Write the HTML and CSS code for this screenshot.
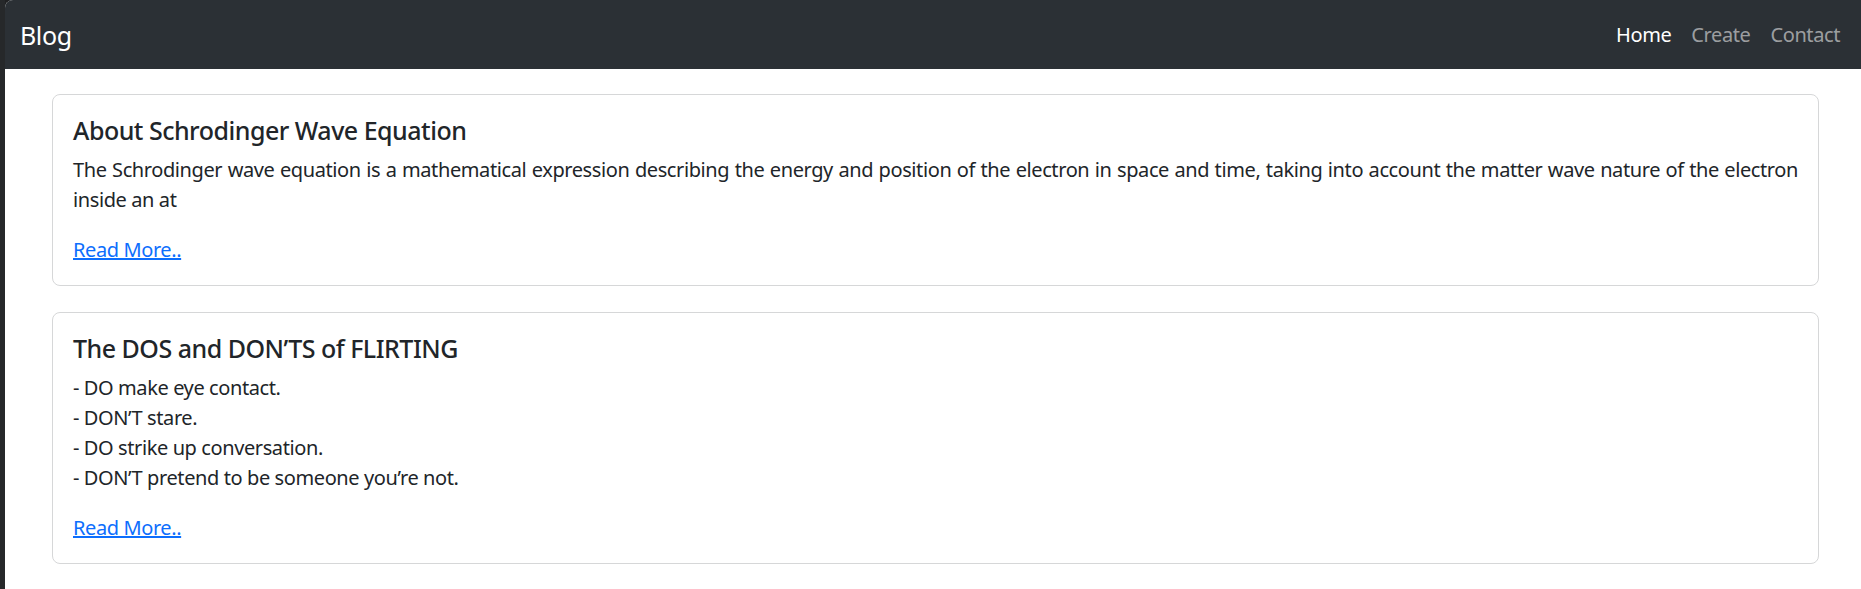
FILE: index.html
```html
<!DOCTYPE html>
<html lang="en">
<head>
<meta charset="utf-8">
<title>Blog</title>
<link rel="stylesheet" href="styles.css">
</head>
<body>
<div class="frame"></div>
<div class="app">
  <nav class="navbar">
    <a class="brand" href="#">Blog</a>
    <ul class="nav">
      <li><a class="nav-link active" href="#">Home</a></li>
      <li><a class="nav-link" href="#">Create</a></li>
      <li><a class="nav-link" href="#">Contact</a></li>
    </ul>
  </nav>
  <main class="content">
    <article class="card">
      <h5 class="card-title">About Schrodinger Wave Equation</h5>
      <p class="card-text">The Schrodinger wave equation is a mathematical expression describing the energy and position of the electron in space and time, taking into account the matter wave nature of the electron inside an at</p>
      <a class="read-more" href="#">Read More..</a>
    </article>
    <article class="card">
      <h5 class="card-title">The DOS and DON’TS of FLIRTING</h5>
      <p class="card-text">- DO make eye contact.<br>- DON’T stare.<br>- DO strike up conversation.<br>- DON’T pretend to be someone you’re not.</p>
      <a class="read-more" href="#">Read More..</a>
    </article>
  </main>
</div>
</body>
</html>
```

FILE: styles.css
```css
html, body {
  margin: 0;
  padding: 0;
  height: 100%;
}

body {
  display: flex;
  background: #1f2022;
  font-family: "Noto Sans", "Open Sans", sans-serif;
  color: #212529;
  overflow: hidden;
  letter-spacing: -0.4px;
}

.frame {
  width: 5px;
  flex: none;
  background: #26282a;
}

.app {
  flex: 1;
  background: #ffffff;
  border-top-left-radius: 8px;
  overflow: hidden;
}

.navbar {
  height: 69px;
  background: #2b3035;
  display: flex;
  align-items: center;
  justify-content: space-between;
  padding: 0 11px 0 15px;
  box-sizing: border-box;
}

.brand {
  color: #ffffff;
  font-size: 25px;
  line-height: 30px;
  text-decoration: none;
}

.nav {
  list-style: none;
  margin: 0;
  padding: 0;
  display: flex;
}

.nav-link {
  display: block;
  padding: 0 10px;
  font-size: 20px;
  line-height: 30px;
  color: rgba(255, 255, 255, 0.55);
  text-decoration: none;
}

.nav-link.active {
  color: #ffffff;
}

.content {
  padding: 25px 42px 0 47px;
  display: flex;
  flex-direction: column;
  gap: 26px;
}

.card {
  border: 1px solid #d6d7d8;
  border-radius: 8px;
  padding: 20px;
}

.card-title {
  margin: 0 0 10px;
  font-size: 25px;
  line-height: 30px;
  font-weight: 500;
  letter-spacing: -0.5px;
}

.card-text {
  margin: 0 0 20px;
  font-size: 20px;
  line-height: 30px;
  text-align: justify;
}

.read-more {
  display: inline-block;
  font-size: 20px;
  line-height: 30px;
  color: #0d6efd;
  text-decoration: underline;
}
```
